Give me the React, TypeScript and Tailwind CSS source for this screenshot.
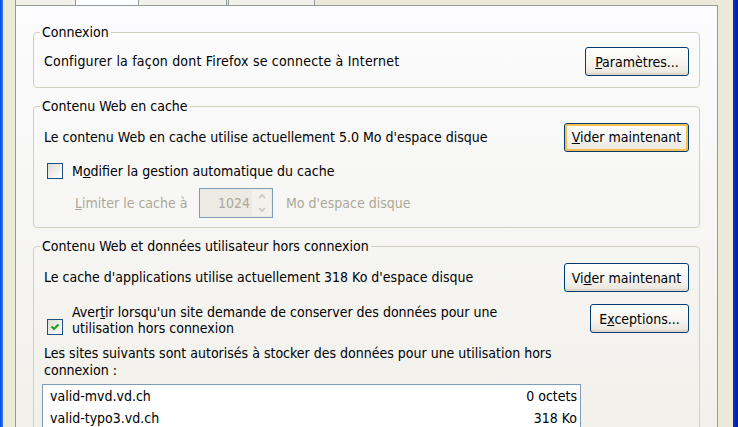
import React from 'react'

// XP-style widgets
function XpButton({ children, width, focused = false }: { children: React.ReactNode; width: string; focused?: boolean }) {
  return (
    <button
      className={`${width} h-[29px] shrink-0 rounded-[3px] border border-[#003c74] bg-gradient-to-b from-white via-[#f7f6f2] to-[#e8e5db] text-black leading-none ${
        focused ? 'shadow-[inset_0_0_0_2px_#f9c04f]' : 'shadow-[inset_0_-2px_0_#dcd7ca]'
      }`}
    >
      {children}
    </button>
  )
}

function XpCheck({ checked = false, className = '' }: { checked?: boolean; className?: string }) {
  return (
    <span className={`w-[16px] h-[16px] shrink-0 border border-[#1c5180] bg-gradient-to-br from-[#dcdcd5] to-white flex items-center justify-center ${className}`}>
      {checked && (
        <svg viewBox="0 0 10 10" className="w-[10px] h-[10px]">
          <path d="M1.5 4.5 L4 7 L8.5 2.5" stroke="#21a121" strokeWidth="2.2" fill="none" />
        </svg>
      )}
    </span>
  )
}

function Group({ title, children, className = '' }: { title: string; children: React.ReactNode; className?: string }) {
  return (
    <fieldset className={`border border-[#d0d0bf] rounded-[4px] px-[10px] ${className}`}>
      <legend className="-ml-[4px] px-[2px] leading-[16px]">{title}</legend>
      {children}
    </fieldset>
  )
}

const sites = [
  { host: 'valid-mvd.vd.ch', size: '0 octets' },
  { host: 'valid-typo3.vd.ch', size: '318 Ko' },
]

export default function App() {
  return (
    <div className="w-[738px] h-[427px] overflow-hidden flex bg-[#ece9d8] text-black text-[14px] font-['DejaVu_Sans_Condensed','DejaVu_Sans',sans-serif]">
      <div className="w-[3px] shrink-0 bg-gradient-to-r from-[#0047dd] to-[#3a7bf0]" />
      <div className="w-[12px] shrink-0" />

      <div className="w-[703px] shrink-0 flex flex-col">
        {/* Tabs (only their bottom edge is visible) */}
        <div className="h-[5px] flex shrink-0">
          <div className="w-[61px] border-x border-[#919b9c] bg-[#f1f0e9]" />
          <div className="w-[63px] border-r border-[#919b9c] bg-[#fcfcfe]" />
          <div className="w-[88px] border-r border-[#919b9c] bg-[#f1f0e9]" />
          <div className="w-[87px] ml-[1px] border-x border-[#919b9c] bg-[#f1f0e9]" />
        </div>

        {/* Tab panel */}
        <div className="flex-1 border border-[#919b9c] bg-gradient-to-b from-[#fcfcfe] to-[#f1f0ea] px-[17px] pt-[18px]">
          <Group title="Connexion" className="pt-[7px] pb-[11px]">
            <div className="flex items-center justify-between h-[29px]">
              <span className="tracking-[0.2px]">Configurer la façon dont Firefox se connecte à Internet</span>
              <XpButton width="w-[104px]">
                <u>P</u>aramètres...
              </XpButton>
            </div>
          </Group>

          <Group title="Contenu Web en cache" className="mt-[10px] pt-[9px] pb-[9px]">
            <div className="flex items-center justify-between h-[28px]">
              <span>Le contenu Web en cache utilise actuellement 5.0 Mo d'espace disque</span>
              <XpButton width="w-[125px]" focused>
                <u>V</u>ider maintenant
              </XpButton>
            </div>
            <div className="mt-[12px] flex items-center gap-[9px] pl-[3px] h-[16px]">
              <XpCheck />
              <span>
                M<u>o</u>difier la gestion automatique du cache
              </span>
            </div>
            <div className="mt-[9px] flex items-center pl-[31px] h-[30px] text-[#aca899]">
              <span className="w-[124px]">
                <u>L</u>imiter le cache à
              </span>
              <div className="w-[74px] h-[30px] border border-[#7f9db9] bg-[#ebeae3] flex">
                <span className="flex-1 text-right pr-[2px] leading-[28px]">1024</span>
                <div className="w-[20px] flex flex-col py-[1px] pr-[1px]">
                  <div className="flex-1 flex items-center justify-center rounded-t-[2px] bg-[#f2f1ec]">
                    <svg viewBox="0 0 8 5" className="w-[8px] h-[5px]">
                      <path d="M1 4 L4 1 L7 4" stroke="#c3c2ba" strokeWidth="1.5" fill="none" />
                    </svg>
                  </div>
                  <div className="flex-1 flex items-center justify-center rounded-b-[2px] bg-[#f2f1ec]">
                    <svg viewBox="0 0 8 5" className="w-[8px] h-[5px]">
                      <path d="M1 1 L4 4 L7 1" stroke="#c3c2ba" strokeWidth="1.5" fill="none" />
                    </svg>
                  </div>
                </div>
              </div>
              <span className="ml-[13px]">Mo d'espace disque</span>
            </div>
          </Group>

          <Group title="Contenu Web et données utilisateur hors connexion" className="mt-[10px] pt-[9px] pb-[10px]">
            <div className="flex items-center justify-between h-[29px]">
              <span>Le cache d'applications utilise actuellement 318 Ko d'espace disque</span>
              <XpButton width="w-[125px]">
                Vi<u>d</u>er maintenant
              </XpButton>
            </div>
            <div className="mt-[12px] flex items-start justify-between">
              <div className="flex items-start gap-[9px] pl-[3px]">
                <XpCheck checked className="mt-[15px]" />
                <span className="leading-[16px]">
                  Aver<u>t</u>ir lorsqu'un site demande de conserver des données pour une
                  <br />
                  utilisation hors connexion
                </span>
              </div>
              <XpButton width="w-[99px]">
                E<u>x</u>ceptions...
              </XpButton>
            </div>
            <p className="mt-[9px] leading-[17px]">
              Les sites suivants sont autorisés à stocker des données pour une utilisation hors
              <br />
              connexion :
            </p>
            <div className="mt-[5px] -ml-[2px] w-[539px] border border-[#7f9db9] bg-white">
              {sites.map((s) => (
                <div key={s.host} className="h-[22px] flex items-center justify-between pl-[7px] pr-[3px]">
                  <span>{s.host}</span>
                  <span>{s.size}</span>
                </div>
              ))}
            </div>
          </Group>
        </div>
      </div>

      <div className="w-[15px] shrink-0" />
      <div className="w-[5px] shrink-0 bg-gradient-to-r from-[#0831d9] to-[#001ea0]" />
    </div>
  )
}
